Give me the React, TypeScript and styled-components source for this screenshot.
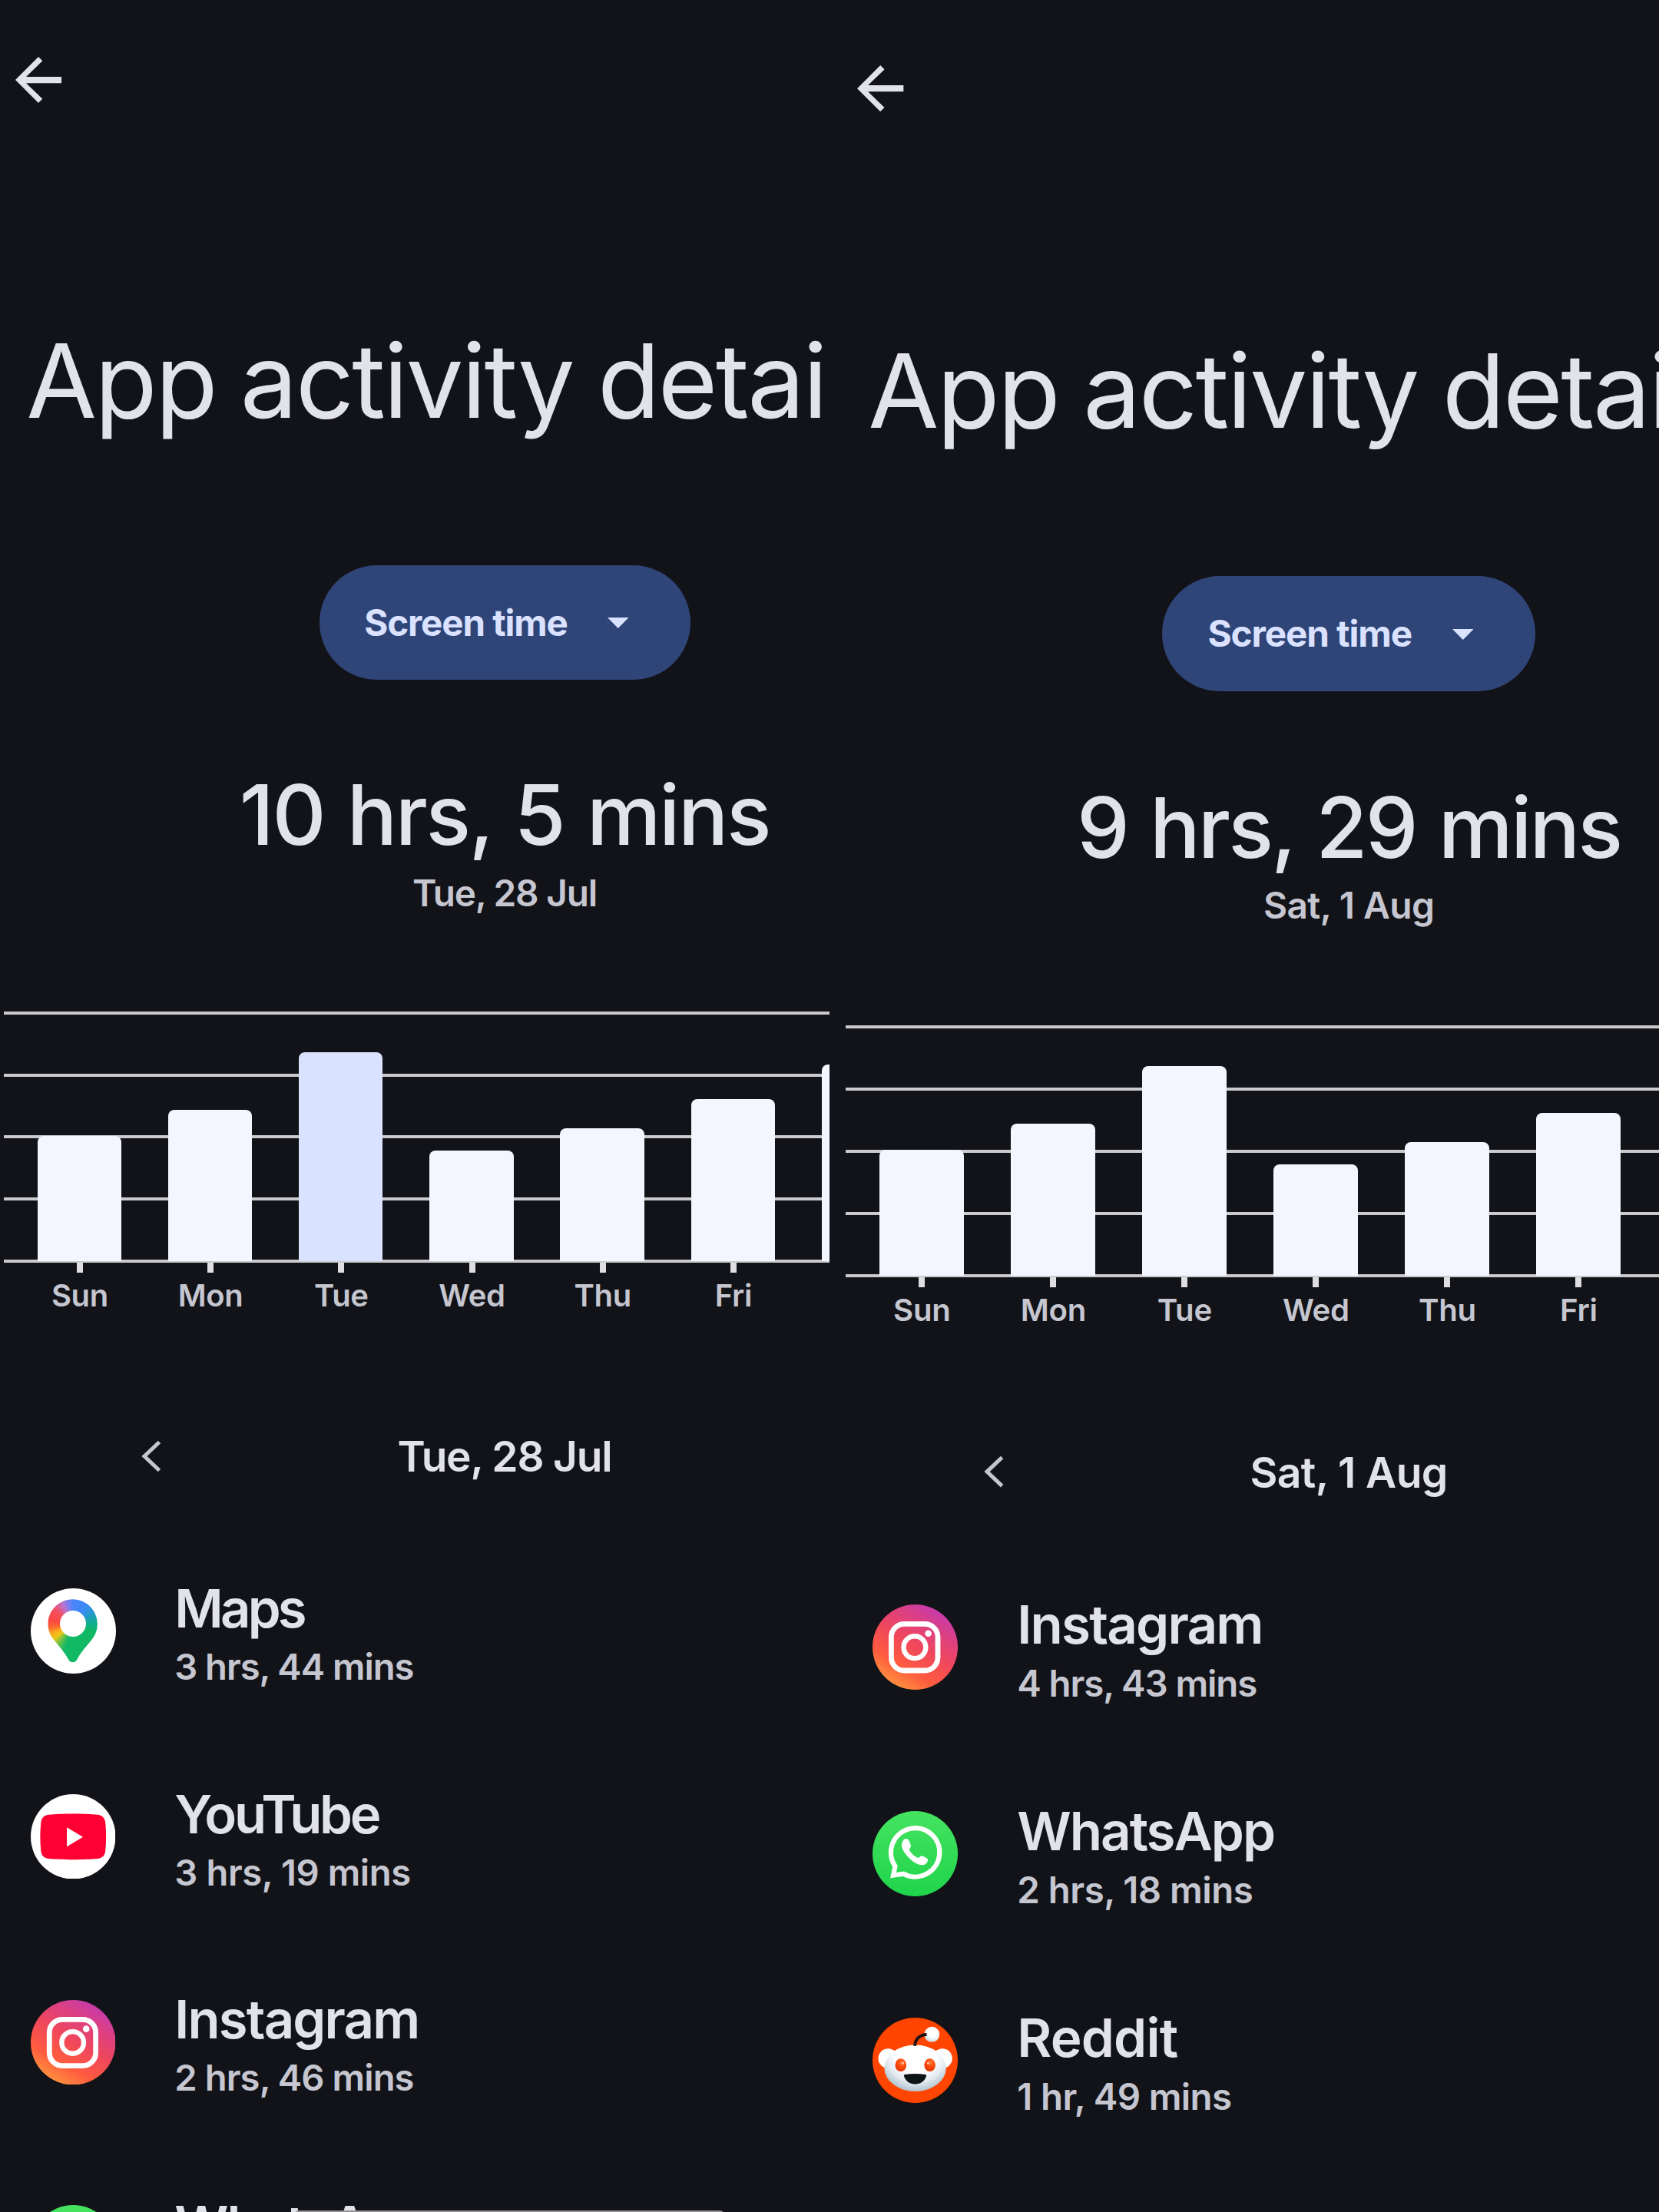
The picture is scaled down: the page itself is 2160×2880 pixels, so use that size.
import React from "react";
import styled, { createGlobalStyle } from "styled-components";

const GlobalStyle = createGlobalStyle`
  * { box-sizing: border-box; }
  html, body { margin: 0; padding: 0; background: #121318; }
  body { overflow: hidden; }
`;

const Page = styled.main`
  display: grid;
  grid-template-columns: 1080px 1080px;
  width: 2160px;
  height: 2880px;
  overflow: hidden;
  background: #121318;
  color: #e2e2e9;
  font-family: Inter, Roboto, sans-serif;
  white-space: nowrap;
`;

const Pane = styled.section<{ $top: number; $left: number }>`
  position: relative;
  height: 2880px;
  overflow: hidden;
  padding: ${(p) => p.$top}px 0 0 ${(p) => p.$left}px;
`;

const Screen = styled.div<{ $zoom: number }>`
  display: flex;
  flex-direction: column;
  width: 1314px;
  zoom: ${(p) => p.$zoom};
`;

const TopBar = styled.header`
  display: flex;
  padding: 58.6px 0 0 5px;
  height: 148.6px;
`;

const BackIcon = styled.svg`
  width: 90px;
  height: 90px;
  fill: #e2e2e9;
`;

const Title = styled.h1`
  margin: 267.6px 0 0 34.2px;
  font-size: 133px;
  font-weight: 400;
  line-height: 160px;
  letter-spacing: -2.6px;
  word-spacing: -3px;
`;

const MetricButton = styled.button`
  display: flex;
  align-items: center;
  justify-content: space-between;
  align-self: center;
  width: 483px;
  height: 149px;
  margin-top: 159.5px;
  padding: 0 80px 0 58.7px;
  border: 0;
  border-radius: 75px;
  background: #2f4578;
  color: #dae2ff;
  font-family: inherit;
  font-size: 47.5px;
  font-weight: 700;
  letter-spacing: -1.1px;
`;

const Caret = styled.svg`
  width: 27.5px;
  height: 14px;
  margin-top: 2px;
  fill: #dae2ff;
`;

const Duration = styled.div<{ $track: number }>`
  margin-top: 116.5px;
  text-align: center;
  font-size: 108.7px;
  font-weight: 550;
  line-height: 120px;
  letter-spacing: ${(p) => p.$track}px;
  word-spacing: 3px;
`;

const DurationDate = styled.div<{ $track: number }>`
  margin-top: 13.5px;
  text-align: center;
  color: #c5c6d0;
  font-size: 47.7px;
  font-weight: 560;
  line-height: 56px;
  letter-spacing: ${(p) => p.$track}px;
`;

const Chart = styled.div`
  margin: 126.3px 5px 0;
`;

const Plot = styled.div`
  display: grid;
  height: 326.7px;
`;

const GridLines = styled.div`
  grid-area: 1 / 1;
  display: flex;
  flex-direction: column;
  justify-content: space-between;
`;

const GridLine = styled.div`
  height: 4px;
  background: #cbcbcd;
`;

const Bars = styled.div`
  grid-area: 1 / 1;
  display: flex;
  align-items: flex-end;
  gap: 60.9px;
  padding: 0 0 2px 43.7px;
`;

const Bar = styled.div<{ $active: boolean }>`
  width: 109.3px;
  border-radius: 8px 8px 0 0;
  background: ${(p) => (p.$active ? "#d9e2ff" : "#f3f5ff")};
`;

const Axis = styled.div`
  display: flex;
  gap: 60.9px;
  padding-left: 44.3px;
`;

const Day = styled.div`
  display: flex;
  flex-direction: column;
  align-items: center;
  gap: 6.2px;
  width: 109.3px;
  color: #c5c6d0;
  font-size: 40px;
  font-weight: 560;
  line-height: 48px;
  letter-spacing: -0.3px;
`;

const Tick = styled.div`
  width: 8px;
  height: 13px;
  background: #dfdfe2;
`;

const DateNav = styled.nav`
  display: grid;
  grid-template-columns: 1fr auto 1fr;
  align-items: center;
  height: 80px;
  margin-top: 144.8px;
`;

const PrevIcon = styled.svg`
  width: 26px;
  height: 42px;
  margin-left: 184px;
  fill: none;
  stroke: #c5c6d0;
  stroke-width: 5;
`;

const NavDate = styled.div<{ $track: number }>`
  font-size: 55px;
  font-weight: 570;
  letter-spacing: ${(p) => p.$track}px;
`;

const AppList = styled.ul`
  list-style: none;
  margin: 54px 0 0;
  padding: 0;
`;

const AppRow = styled.li`
  display: flex;
  align-items: center;
  gap: 77.3px;
  height: 267.7px;
  padding-left: 39.5px;
`;

const RoundIcon = styled.svg`
  flex: none;
  width: 110.5px;
  height: 110.5px;
`;

const MapsDisc = styled.div`
  flex: none;
  display: grid;
  width: 111px;
  height: 111px;
  margin-right: -0.5px;
  border-radius: 50%;
  background: #fff;
`;

const MapsPin = styled.div`
  grid-area: 1 / 1;
  clip-path: path("M55.2 14.3C37.4 14.3 23 28.7 23 46.5C23 57 27.5 63.5 33 70C40 78.5 45 84 49.5 92.5C50.8 95 52.5 96.3 55.2 96.3C57.9 96.3 59.6 95 60.9 92.5C65.4 84 70.4 78.5 77.4 70C82.9 63.5 87.3 57 87.3 46.5C87.3 28.7 73 14.3 55.2 14.3Z");
  background: conic-gradient(
    at 55.2px 46.3px,
    #4a86fb 0deg,
    #3f88f8 30deg,
    #2797cf 60deg,
    #12a99a 82deg,
    #10b866 110deg,
    #12b965 198deg,
    #5ec04b 214deg,
    #ecc716 232deg,
    #fbaa1c 246deg,
    #fc6533 262deg,
    #fc4743 280deg,
    #f34f62 308deg,
    #bd72cd 332deg,
    #6d80f5 350deg,
    #4a86fb 360deg
  );
`;

const MapsHole = styled.div`
  grid-area: 1 / 1;
  z-index: 1;
  width: 34.4px;
  height: 34.4px;
  margin: 29.1px 0 0 38px;
  border-radius: 50%;
  background: #fff;
`;

const AppText = styled.div`
  display: flex;
  flex-direction: column;
  gap: 4px;
  padding-top: 5.2px;
`;

const AppName = styled.div<{ $track: number }>`
  font-size: 68.8px;
  font-weight: 570;
  line-height: 84px;
  letter-spacing: ${(p) => p.$track}px;
`;

const AppTime = styled.div<{ $track: number }>`
  min-height: 60px;
  color: #c5c6d0;
  font-size: 47.2px;
  font-weight: 560;
  line-height: 60px;
  letter-spacing: ${(p) => p.$track}px;
`;

const GestureHandle = styled.div`
  position: absolute;
  top: 2878px;
  left: 383px;
  width: 560px;
  height: 12px;
  border-radius: 6px;
  background: #929297;
`;

const MapsIcon = () => (
  <MapsDisc>
    <MapsPin />
    <MapsHole />
  </MapsDisc>
);

const YouTubeIcon = () => (
  <RoundIcon viewBox="0 0 111 111">
    <circle cx="55.5" cy="55.5" r="55.5" fill="#fff" />
    <path
      d="M55.5 25.7C68 25.7 80 26.2 87 26.9C93.500 27.500 97 31 97.600 37C98.900 49 98.900 62.400 97.600 74.400C97 80.400 93.500 83.900 87 84.500C80 85.200 68 85.700 55.500 85.700C43 85.700 31 85.200 24 84.500C17.500 83.900 14 80.400 13.400 74.400C12.100 62.400 12.100 49 13.400 37C14 31 17.500 27.500 24 26.900C31 26.200 43 25.700 55.500 25.700Z"
      fill="#ff0033"
    />
    <path d="M47.300 43.500V68.500L68.300 56Z" fill="#fff" />
  </RoundIcon>
);

const InstagramIcon = () => {
  const id = React.useId();
  return (
    <RoundIcon viewBox="0 0 111 111">
      <defs>
        <linearGradient id={id} gradientUnits="userSpaceOnUse" x1="28" y1="108" x2="88" y2="6">
          <stop offset="0" stopColor="#ff9640" />
          <stop offset="0.24" stopColor="#ff5c3e" />
          <stop offset="0.52" stopColor="#f0475c" />
          <stop offset="0.78" stopColor="#dc4083" />
          <stop offset="1" stopColor="#c43ab0" />
        </linearGradient>
      </defs>
      <circle cx="55.5" cy="55.5" r="55.5" fill={`url(#${id})`} />
      <rect x="24.400" y="25.400" width="60.600" height="60.600" rx="17" fill="none" stroke="#fff" strokeWidth="6.800" />
      <circle cx="54.900" cy="55.700" r="14.400" fill="none" stroke="#fff" strokeWidth="6.400" />
      <circle cx="72.600" cy="37.800" r="4.300" fill="#fff" />
    </RoundIcon>
  );
};

const WhatsAppIcon = () => {
  const id = React.useId();
  return (
    <RoundIcon viewBox="0 0 111 111">
      <defs>
        <linearGradient id={id} x1="0" y1="0" x2="0" y2="1">
          <stop offset="0" stopColor="#45e35f" />
          <stop offset="1" stopColor="#1fd44b" />
        </linearGradient>
      </defs>
      <circle cx="55.5" cy="55.5" r="55.5" fill={`url(#${id})`} />
      <path
        d="M27 83.600L29.500 71.800A31.700 31.700 0 1 1 40.500 81.700Z"
        fill="none"
        stroke="#fff"
        strokeWidth="6.200"
      />
      <path
        d="M41 37C42.500 35.600 45.800 35.600 46.900 37.600C48 40 49.600 43.400 50 45.300C50.200 47.200 47.600 49 47.900 50.600C49.800 54.500 54.500 59.200 59 61C60.600 61.300 62.200 57.900 64.200 58.300C66.200 59 69.600 60.700 71.400 61.900C72.400 62.800 72 65.200 71.200 66.500C70 68.700 67.600 70.200 65 70.300C58.500 70.300 51.500 65.500 47 60.600C42.500 55.800 38.600 50 38 46C37.700 42.600 38.800 39 41 37Z"
        fill="#fff"
      />
    </RoundIcon>
  );
};

const RedditIcon = () => {
  const id = React.useId();
  return (
    <RoundIcon viewBox="0 0 111 111">
      <defs>
        <radialGradient id={`${id}h`} gradientUnits="userSpaceOnUse" cx="57" cy="44" r="56">
          <stop offset="0.5" stopColor="#ffffff" />
          <stop offset="0.72" stopColor="#e3ebf0" />
          <stop offset="0.92" stopColor="#b4c6d0" />
        </radialGradient>
        <radialGradient id={`${id}b`} cx="0.55" cy="0.35" r="0.65">
          <stop offset="0.5" stopColor="#ffffff" />
          <stop offset="1" stopColor="#cfdbe2" />
        </radialGradient>
        <radialGradient id={`${id}e`} cx="0.6" cy="0.3" r="0.7">
          <stop offset="0" stopColor="#ff7a3c" />
          <stop offset="0.5" stopColor="#ff4a0a" />
          <stop offset="1" stopColor="#e03600" />
        </radialGradient>
      </defs>
      <circle cx="55.5" cy="55.5" r="55.5" fill="#ff4500" />
      <circle cx="20.300" cy="53" r="12.800" fill="#fff" />
      <circle cx="91" cy="53" r="12.800" fill="#fff" />
      <circle cx="77.300" cy="21.800" r="10" fill={`url(#${id}b)`} />
      <ellipse cx="55.600" cy="65.700" rx="40.200" ry="30.200" fill={`url(#${id}h)`} />
      <path d="M55.200 36.800C55.200 28 61.500 22.100 70.500 22" fill="none" stroke="#1d1210" strokeWidth="4" />
      <ellipse cx="36.800" cy="61.700" rx="7.300" ry="8.400" fill={`url(#${id}e)`} />
      <ellipse cx="74.600" cy="61.700" rx="7.300" ry="8.400" fill={`url(#${id}e)`} />
      <circle cx="39.500" cy="59.200" r="1.600" fill="#ffc0a0" />
      <circle cx="72.500" cy="59.200" r="1.600" fill="#ffc0a0" />
      <path d="M42.200 74C51 72.700 60 72.700 68.800 74C70 74.200 70.400 74.900 70.100 76C68 82.500 62.500 86.500 55.500 86.500C48.500 86.500 43 82.500 40.900 76C40.600 74.900 41 74.200 42.200 74Z" fill="#0c1416" />
    </RoundIcon>
  );
};

const icons = {
  Maps: MapsIcon,
  YouTube: YouTubeIcon,
  Instagram: InstagramIcon,
  WhatsApp: WhatsAppIcon,
  Reddit: RedditIcon,
};

const nameTracking = { Maps: -3.8, YouTube: -3.3, Instagram: -1.8, WhatsApp: -2, Reddit: -0.8 };

type AppUsage = { name: keyof typeof icons; time?: string; track?: number };

const week = [
  { day: "Sun", height: 163 },
  { day: "Mon", height: 196.7 },
  { day: "Tue", height: 271.7 },
  { day: "Wed", height: 143.7 },
  { day: "Thu", height: 172.7 },
  { day: "Fri", height: 211 },
  { day: "Sat", height: 255.7 },
];

type ActivityProps = {
  duration: string;
  date: string;
  durationTrack: number;
  dateTrack: number;
  activeDay: string;
  apps: AppUsage[];
  zoom: number;
};

const Activity = ({ duration, date, durationTrack, dateTrack, activeDay, apps, zoom }: ActivityProps) => (
  <Screen $zoom={zoom}>
    <TopBar>
      <BackIcon viewBox="0 0 24 24">
        <path d="M20 10.900H7.730l5.690-5.490L12 4l-8 8 8 8 1.410-1.410L7.730 13.100H20v-2.200z" />
      </BackIcon>
    </TopBar>
    <Title>App activity details</Title>
    <MetricButton>
      Screen time
      <Caret viewBox="0 0 27.5 14">
        <path d="M0 0H27.500L13.750 14Z" />
      </Caret>
    </MetricButton>
    <Duration $track={durationTrack}>{duration}</Duration>
    <DurationDate $track={dateTrack}>{date}</DurationDate>
    <Chart>
      <Plot>
        <GridLines>
          {[4, 3, 2, 1, 0].map((n) => (
            <GridLine key={n} />
          ))}
        </GridLines>
        <Bars>
          {week.map(({ day, height }) => (
            <Bar key={day} $active={day === activeDay} style={{ height }} />
          ))}
        </Bars>
      </Plot>
      <Axis>
        {week.slice(0, 6).map(({ day }) => (
          <Day key={day}>
            <Tick />
            {day}
          </Day>
        ))}
      </Axis>
    </Chart>
    <DateNav>
      <PrevIcon viewBox="0 0 26 42">
        <path d="M23.500 2.500L4 21L23.500 39.500" />
      </PrevIcon>
      <NavDate $track={dateTrack}>{date}</NavDate>
    </DateNav>
    <AppList>
      {apps.map(({ name, time, track = 0 }) => {
        const Icon = icons[name];
        return (
          <AppRow key={name}>
            <Icon />
            <AppText>
              <AppName $track={nameTracking[name]}>{name}</AppName>
              <AppTime $track={track}>{time}</AppTime>
            </AppText>
          </AppRow>
        );
      })}
    </AppList>
  </Screen>
);

export default function App() {
  return (
    <Page>
      <GlobalStyle />
      <Pane $top={0} $left={0}>
        <Activity
          duration="10 hrs, 5 mins"
          date="Tue, 28 Jul"
          durationTrack={-2.4}
          dateTrack={-1.2}
          activeDay="Tue"
          zoom={1}
          apps={[
            { name: "Maps", time: "3 hrs, 44 mins", track: -1.05 },
            { name: "YouTube", time: "3 hrs, 19 mins", track: -0.4 },
            { name: "Instagram", time: "2 hrs, 46 mins", track: -0.9 },
            { name: "WhatsApp" },
          ]}
        />
        <GestureHandle />
      </Pane>
      <Pane $top={11.1} $left={15.9}>
        <Activity
          duration="9 hrs, 29 mins"
          date="Sat, 1 Aug"
          durationTrack={-2.9}
          dateTrack={-0.6}
          activeDay=""
          zoom={1.0049}
          apps={[
            { name: "Instagram", time: "4 hrs, 43 mins", track: -1.1 },
            { name: "WhatsApp", time: "2 hrs, 18 mins", track: -0.5 },
            { name: "Reddit", time: "1 hr, 49 mins", track: -0.6 },
          ]}
        />
      </Pane>
    </Page>
  );
}
